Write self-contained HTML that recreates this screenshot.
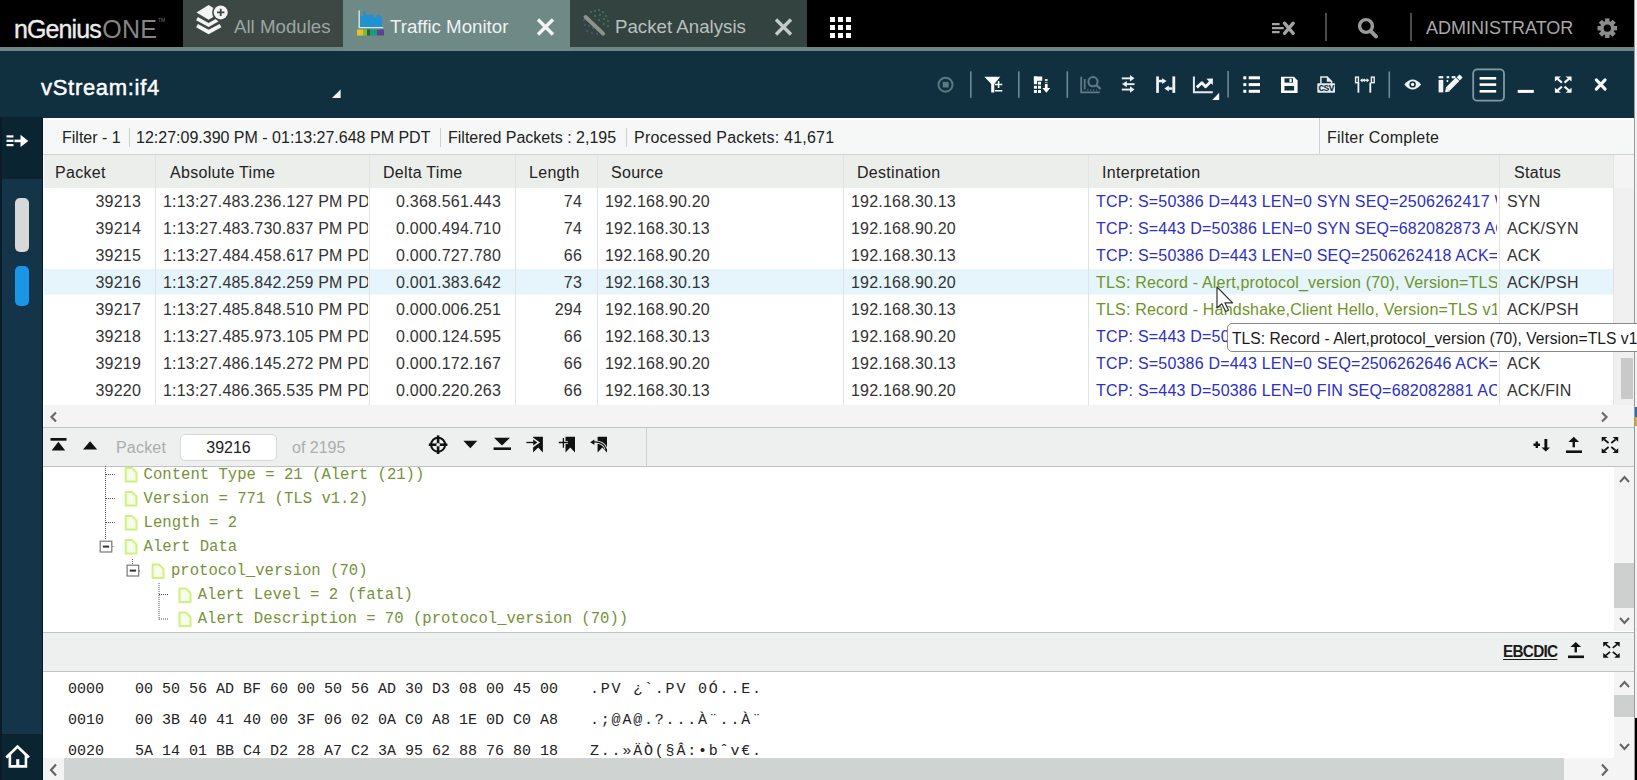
<!DOCTYPE html>
<html><head><meta charset="utf-8">
<style>
*{margin:0;padding:0;box-sizing:border-box}
html,body{width:1637px;height:780px;overflow:hidden;background:#f4f4f4;font-family:"Liberation Sans",sans-serif}
.a{position:absolute}
svg{position:absolute;overflow:visible}
.tabt{font-size:18.7px;white-space:nowrap;position:absolute}
.ft{position:absolute;top:128.5px;font-size:16px;color:#222;white-space:nowrap;line-height:18px}
.fsep{position:absolute;top:128px;width:1px;height:19px;background:#cdd0ce}
.th{position:absolute;top:163.5px;font-size:16px;color:#222;white-space:nowrap;line-height:18px;letter-spacing:0.3px}
.vl{position:absolute;width:1px;background:#e2e4e3}
.row{position:absolute;left:44px;width:1570px;height:27px}
.c{position:absolute;font-size:16px;color:#333;letter-spacing:0.2px;white-space:nowrap;overflow:hidden;top:5px;height:20px;line-height:18px}
.r{text-align:right}
.blue{color:#2b30c6}
.grn{color:#6e9426}
.tree{position:absolute;font-size:15.6px;color:#76923a;white-space:pre;font-family:"Liberation Mono",monospace;line-height:18px}
.hex{position:absolute;font-size:15px;color:#222;white-space:pre;font-family:"Liberation Mono",monospace;line-height:18px}
</style></head><body>
<!-- ===== top bar ===== -->
<div class="a" style="left:0;top:0;width:1634px;height:47px;background:#000"></div>
<div class="a" style="left:0;top:47px;width:1634px;height:4px;background:#6d8785"></div>
<div class="a" style="left:14px;top:15px;font-size:25px;color:#ececec;letter-spacing:-0.9px;white-space:nowrap"><span style="-webkit-text-stroke:0.35px #ececec">nGenius</span><span style="color:#858585;letter-spacing:0.2px;margin-left:1.5px">ONE</span></div>
<div class="a" style="left:158px;top:18px;font-size:5px;color:#777;line-height:5px">TM</div>
<div class="a" style="left:183px;top:0;width:160px;height:47px;background:#3d4744"></div>
<svg style="left:185px;top:0" width="60" height="46" viewBox="0 0 60 46">
 <path d="M11.5 12.4 L23.6 5 L35.7 12.4 L23.6 19.8 Z" fill="#f4f4f4"/>
 <path d="M12 18.6 L23.6 25 L32.5 20" fill="none" stroke="#f4f4f4" stroke-width="3.6" stroke-linejoin="miter"/>
 <path d="M12 25.6 L23.6 32 L35.5 25.6" fill="none" stroke="#f4f4f4" stroke-width="3.8"/>
 <circle cx="35.7" cy="12.4" r="8.6" fill="#3d4744"/>
 <circle cx="35.7" cy="12.4" r="7" fill="#f4f4f4"/>
 <path d="M32 12.4 H39.4 M35.7 8.7 V16.1" stroke="#3d4744" stroke-width="1.8"/>
</svg>
<div class="tabt" style="left:234px;top:16px;color:#9ca5a2">All Modules</div>
<div class="a" style="left:343px;top:0;width:227px;height:51px;background:#6e8986"></div>
<svg style="left:350px;top:5px" width="40" height="36" viewBox="0 0 40 36">
 <path d="M10.2 21.8 V11.4 Q11.5 10.8 13 11 L13.6 6.4 Q14.6 5.6 15.6 6.6 L16 9.9 Q20 9.4 23.4 10 L24 12.4 Q25 13 26.2 12.4 L26.8 9.9 Q28.8 9.5 30.4 10.4 L31 11.4 L32 12 V21.8 Z" fill="#1f92d2"/>
 <path d="M9.2 5.5 V22.6 H33.2" fill="none" stroke="#d4e6ea" stroke-width="1.4"/>
 <rect x="7" y="24.5" width="6" height="6" fill="#e5c22a"/>
 <rect x="13" y="24.5" width="4" height="6" fill="#7cbb3a"/>
 <rect x="17" y="24.5" width="3" height="6" fill="#1f6a2e"/>
 <rect x="20" y="24.5" width="7" height="6" fill="#1a9a86"/>
 <rect x="27" y="24.5" width="7" height="6" fill="#5a4490"/>
</svg>
<div class="tabt" style="left:390px;top:16px;color:#eef3f2">Traffic Monitor</div>
<svg style="left:536px;top:18px" width="19" height="18" viewBox="0 0 19 18">
 <path d="M2 1.5 L17 16.5 M17 1.5 L2 16.5" stroke="#f2f5f4" stroke-width="3.4"/>
</svg>
<div class="a" style="left:570px;top:0;width:237px;height:47px;background:#33433f"></div>
<svg style="left:575px;top:5px" width="40" height="36" viewBox="0 0 40 36">
 <g fill="#3f8a6a" opacity="0.8">
 <circle cx="24" cy="5" r="1"/><circle cx="28" cy="7" r="1"/><circle cx="31" cy="11" r="1"/><circle cx="33" cy="16" r="1"/><circle cx="33" cy="21" r="1"/><circle cx="20" cy="6" r="1"/><circle cx="25" cy="10" r="1"/><circle cx="29" cy="14" r="1"/><circle cx="29" cy="19" r="1"/><circle cx="24" cy="15" r="1"/><circle cx="16" cy="7" r="1"/><circle cx="20" cy="11" r="1"/>
 </g>
 <g fill="#5b5a9a" opacity="0.8">
 <circle cx="10" cy="20" r="1"/><circle cx="12" cy="26" r="1"/><circle cx="17" cy="28" r="1"/><circle cx="14" cy="21" r="1"/><circle cx="18" cy="23" r="1"/><circle cx="22" cy="29" r="1"/><circle cx="9" cy="15" r="1"/>
 </g>
 <path d="M10.6 12 L28.1 28.6" stroke="#8d938b" stroke-width="4" stroke-linecap="round"/>
</svg>
<div class="tabt" style="left:615px;top:16px;color:#b9c0be">Packet Analysis</div>
<svg style="left:774px;top:18px" width="19" height="18" viewBox="0 0 19 18">
 <path d="M2 1.5 L17 16.5 M17 1.5 L2 16.5" stroke="#c5cac8" stroke-width="3.4"/>
</svg>
<svg style="left:830px;top:17px" width="22" height="21" viewBox="0 0 22 21">
 <g fill="#fff"><rect x="0" y="0" width="5" height="5"/><rect x="8" y="0" width="5" height="5"/><rect x="16" y="0" width="5" height="5"/>
 <rect x="0" y="8" width="5" height="5"/><rect x="8" y="8" width="5" height="5"/><rect x="16" y="8" width="5" height="5"/>
 <rect x="0" y="16" width="5" height="5"/><rect x="8" y="16" width="5" height="5"/><rect x="16" y="16" width="5" height="5"/></g>
</svg>
<svg style="left:1265px;top:12px" width="40" height="30" viewBox="0 0 40 30">
 <path d="M7 12.1 H14.6 M7 16.2 H18.8 M7 20.2 H14.6" stroke="#a3a3a3" stroke-width="2.2"/>
 <path d="M19.5 11.2 L28.2 21.3 M28.2 11.2 L19.5 21.3" stroke="#a3a3a3" stroke-width="3.4" stroke-linecap="round"/>
</svg>
<div class="a" style="left:1325px;top:13px;width:2px;height:28px;background:#4a4a4a"></div>
<svg style="left:1350px;top:12px" width="40" height="30" viewBox="0 0 40 30">
 <circle cx="16" cy="14" r="6.4" fill="none" stroke="#9a9a9a" stroke-width="3.4"/>
 <path d="M21.5 19.8 L26 24.3" stroke="#9a9a9a" stroke-width="4" stroke-linecap="round"/>
</svg>
<div class="a" style="left:1410px;top:13px;width:2px;height:28px;background:#4a4a4a"></div>
<div class="tabt" style="left:1426px;top:17.5px;font-size:18px;color:#a8a8a8">ADMINISTRATOR</div>
<svg style="left:1590px;top:12px" width="40" height="30" viewBox="0 0 40 30">
 <g transform="translate(17.3 16.2)" fill="#8c8c8c">
  <circle r="7.2"/>
  <g id="teeth"><rect x="-2.2" y="-9.8" width="4.4" height="5"/><rect x="-2.2" y="4.8" width="4.4" height="5"/><rect x="-9.8" y="-2.2" width="5" height="4.4"/><rect x="4.8" y="-2.2" width="5" height="4.4"/></g>
  <g transform="rotate(45)"><rect x="-2.2" y="-9.8" width="4.4" height="5"/><rect x="-2.2" y="4.8" width="4.4" height="5"/><rect x="-9.8" y="-2.2" width="5" height="4.4"/><rect x="4.8" y="-2.2" width="5" height="4.4"/></g>
  <circle r="3.6" fill="#000"/>
 </g>
</svg>
<!-- ===== module header ===== -->
<div class="a" style="left:0;top:51px;width:1634px;height:67px;background:#11303f"></div>
<div class="a" style="left:41px;top:75px;font-size:22px;color:#fff;letter-spacing:0.7px;white-space:nowrap;-webkit-text-stroke:0.45px #fff">vStream:if4</div>
<svg style="left:331px;top:88px" width="12" height="12" viewBox="0 0 12 12"><path d="M1 10 L9.6 1.6 V10 Z" fill="#f2f2f2"/></svg>
<svg style="left:920px;top:60px" width="714" height="50" viewBox="0 0 714 50">
 <!-- stop -->
 <circle cx="25.5" cy="24.7" r="7" fill="none" stroke="#5a7a84" stroke-width="1.9"/>
 <rect x="22.7" y="21.9" width="6" height="5.6" fill="#5a7a84"/>
 <g fill="#6a8995">
  <rect x="50" y="11.3" width="1.6" height="26.5"/>
  <rect x="98" y="11.3" width="1.6" height="26.5"/>
  <rect x="146.5" y="11.3" width="1.6" height="26.5"/>
  <rect x="307.3" y="11" width="1.6" height="26.5"/>
  <rect x="468.5" y="11.4" width="1.6" height="26.5"/>
 </g>
 <!-- filter +- -->
 <path d="M64.4 16.7 H80.3 L74.3 24 V32.6 H71.2 V24 Z" fill="#fff"/>
 <path d="M75 26.5 H82.3 M78.6 21 V28 M75 30.8 H82.3" stroke="#11303f" stroke-width="3.2"/>
 <path d="M75 24.5 H82.3 M78.6 21 V28 M75 30.8 H82.3" stroke="#fff" stroke-width="1.5"/>
 <!-- column sort -->
 <g fill="#fff">
  <rect x="113.9" y="16.5" width="8.3" height="4.3"/>
  <rect x="113.9" y="16.5" width="3.2" height="7.7"/>
  <rect x="118" y="21.8" width="3" height="2.8"/>
  <rect x="113.9" y="25.8" width="3" height="2.9"/><rect x="118" y="25.8" width="3" height="2.9"/>
  <rect x="113.9" y="30" width="3" height="3"/><rect x="118" y="30" width="3" height="3"/>
  <rect x="124.9" y="19" width="2.7" height="2.1" opacity="0.85"/>
  <rect x="124.9" y="22.2" width="2.7" height="0.9" opacity="0.7"/>
  <rect x="124.9" y="24" width="2.7" height="5"/>
  <path d="M122.4 28 H130.2 L126.3 32.8 Z"/>
 </g>
 <!-- analysis (dim) -->
 <g stroke="#5e7c87" fill="none">
  <path d="M161.2 16.8 V32.4 H179.8" stroke-width="1.8"/>
  <path d="M164.7 19 V29.5" stroke-width="1.8"/>
  <circle cx="173" cy="21.7" r="4.6" stroke-width="2"/>
  <path d="M176.3 25 L180.5 29" stroke-width="2.4"/>
  <path d="M167 30 H177" stroke-width="1.2" stroke-dasharray="1.5 1.5"/>
 </g>
 <!-- arrows 3 -->
 <g fill="#eaf0f2">
  <rect x="201.8" y="17.4" width="9" height="1.9"/><path d="M210 15 L214.5 18.3 L210 21.6 Z"/>
  <rect x="206" y="23.2" width="8.5" height="1.9"/><path d="M206.8 20.9 L202 24.1 L206.8 27.3 Z"/>
  <rect x="201.8" y="28.6" width="9" height="1.9"/><path d="M210 26.3 L214.5 29.5 L210 32.7 Z"/>
 </g>
 <!-- |-> <-| -->
 <g fill="#f2f5f6">
  <rect x="236.2" y="16.4" width="2.7" height="16.5"/>
  <rect x="252.4" y="16.4" width="2.8" height="16.5"/>
  <rect x="238.9" y="19.8" width="3.6" height="2.5"/><path d="M242.1 18.2 L246.6 21.05 L242.1 23.9 Z"/>
  <rect x="248.4" y="27.3" width="4.1" height="2.5"/><path d="M248.8 25.5 L244.4 28.55 L248.8 31.6 Z"/>
 </g>
 <!-- chart -->
 <path d="M273.9 16.6 V32.3 H292.8" stroke="#e3ecef" stroke-width="2" fill="none"/>
 <path d="M276.8 27.4 L281.9 22.7 L285.6 26.7 L290.8 21.4" stroke="#f4f7f8" stroke-width="2.8" fill="none" stroke-linejoin="round"/>
 <path d="M286.4 18.7 L292.9 18.6 L292.8 25 Z" fill="#f4f7f8"/>
 <path d="M292.2 40 L299.2 32.8 V40 Z" fill="#f4f7f8"/>
 <!-- list -->
 <g fill="#fff">
  <rect x="323.3" y="16.3" width="3" height="3"/><rect x="323.3" y="23.1" width="3" height="3"/><rect x="323.3" y="29.8" width="3" height="3"/>
  <rect x="328.7" y="16.3" width="11.3" height="3"/><rect x="328.7" y="23.1" width="11.3" height="3"/><rect x="328.7" y="29.8" width="11.3" height="3"/>
 </g>
 <!-- save -->
 <path d="M361 16.8 H374 L377.6 20.4 V32.9 H361 Z" fill="#fff"/>
 <rect x="364.5" y="18.3" width="8.5" height="4.3" fill="#11303f"/>
 <rect x="369.5" y="18.8" width="2.2" height="3.2" fill="#fff"/>
 <rect x="364.5" y="26" width="9.6" height="4.5" fill="#11303f"/>
 <!-- csv -->
 <path d="M400.9 23.4 V17.1 H407.2 L411.6 21.6 V23.4" fill="none" stroke="#e4ecee" stroke-width="1.5"/>
 <path d="M406.8 16.4 L411.9 21.8 H406.8 Z" fill="#e4ecee"/>
 <rect x="397.3" y="23.3" width="17.7" height="9.4" rx="0.8" fill="#e4ecee"/>
 <text x="406.2" y="31.4" font-family="Liberation Mono" font-size="9.6" font-weight="bold" fill="#11303f" text-anchor="middle" letter-spacing="-0.6">CSV</text>
 <!-- antenna -->
 <g fill="none" stroke="#eef3f4" stroke-width="1.4">
  <rect x="435.6" y="17.1" width="2.8" height="5.6"/>
  <rect x="451.4" y="17.1" width="2.8" height="5.6"/>
 </g>
 <g fill="#eef3f4">
  <rect x="437.5" y="22.5" width="1.8" height="10.2"/>
  <rect x="449.4" y="22.5" width="1.8" height="10.2"/>
  <rect x="441.5" y="19.7" width="5.6" height="1.2"/>
  <path d="M440 20.3 L442.6 18.2 V22.4 Z M449.3 20.3 L446.7 18.2 V22.4 Z"/>
  <path d="M444.3 18.6 L445.9 20.3 L444.3 22 L442.7 20.3 Z"/>
 </g>
 <!-- eye -->
 <path d="M484.3 24.5 Q492.7 14.6 501.1 24.5 Q492.7 34.4 484.3 24.5 Z" fill="#eef3f5"/>
 <circle cx="492.6" cy="24.4" r="3.2" fill="#11303f"/>
 <circle cx="492.6" cy="24.4" r="1.6" fill="#fff"/>
 <!-- edit -->
 <g fill="#f2f6f7">
  <rect x="518.6" y="16.1" width="4.7" height="2.3"/>
  <rect x="518.6" y="19.9" width="4.7" height="12.5"/>
  <rect x="526.6" y="16.1" width="2.6" height="2.2"/><rect x="531.6" y="16.1" width="3.8" height="2.2"/>
  <rect x="526.6" y="20" width="1.6" height="2"/>
 </g>
 <path d="M527.6 29.3 L537.6 19.3" stroke="#f2f6f7" stroke-width="5"/>
 <path d="M536.6 17.2 L539.6 14.4 L542.6 17.4 L539.8 20.4 Z" fill="#f2f6f7"/>
 <path d="M525.1 32.3 L526 27.6 L529.8 31.4 Z" fill="#f2f6f7"/>
 <!-- eye mod -->
 <!-- hamburger box -->
 <rect x="553.2" y="9.4" width="30.8" height="31.3" rx="4" fill="none" stroke="#7d9aa5" stroke-width="1.8"/>
 <g fill="#fff">
  <rect x="559.6" y="17" width="16.6" height="2.6"/>
  <rect x="559.6" y="23.3" width="16.6" height="2.6"/>
  <rect x="559.6" y="30" width="16.6" height="2.6"/>
 </g>
 <!-- minimize -->
 <rect x="597.7" y="29.9" width="16.1" height="3" fill="#fff"/>
 <!-- expand -->
 <g transform="translate(634.9 16.4) scale(1.01 1.04)"><path d="M0 0 H6 L0 5 Z M16.5 0 H10.5 L16.5 5 Z M0 15.8 H6 L0 10.8 Z M16.5 15.8 H10.5 L16.5 10.8 Z" fill="#f4f8f9"/><path d="M2.6 2.4 L7 6 M13.9 2.4 L9.5 6 M2.6 13.4 L7 9.8 M13.9 13.4 L9.5 9.8" stroke="#f4f8f9" stroke-width="2"/></g>
 <!-- close -->
 <path d="M676.3 19.9 L685.1 29.1 M685.1 19.9 L676.3 29.1" stroke="#f4f8f9" stroke-width="3.1" stroke-linecap="round"/>
</svg>
<!-- ===== sidebar ===== -->
<div class="a" style="left:0;top:117px;width:43px;height:663px;background:#14344a"></div>
<div class="a" style="left:0;top:117px;width:43px;height:62px;background:#0a2432"></div>
<div class="a" style="left:0;top:734px;width:43px;height:46px;background:#0a2432"></div>
<div class="a" style="left:0;top:117px;width:2px;height:663px;background:#0a1c28"></div>
<svg style="left:0;top:117px" width="43" height="62" viewBox="0 0 43 62">
 <g fill="#fff">
  <rect x="6.5" y="18.3" width="7" height="2.2"/><rect x="6.5" y="22.7" width="7" height="2.2"/><rect x="6.5" y="27" width="7" height="2.2"/>
  <rect x="14.5" y="22.6" width="8" height="2.6"/>
  <path d="M20.5 17.8 L28.3 23.9 L20.5 30 Z"/>
 </g>
</svg>
<div class="a" style="left:15px;top:198px;width:14px;height:54px;border-radius:5px;background:#d8d8d8"></div>
<div class="a" style="left:15px;top:266px;width:14px;height:40px;border-radius:5px;background:#1996e6"></div>
<svg style="left:0;top:734px" width="43" height="46" viewBox="0 0 43 46">
 <path d="M6.3 23.4 L17.5 12.6 L28.9 23.4" fill="none" stroke="#fff" stroke-width="2.8" stroke-linejoin="miter"/>
 <path d="M9.85 20.5 V32.4 H25.95 V20.5" fill="none" stroke="#fff" stroke-width="2.6"/>
 <rect x="16.2" y="25.2" width="3.1" height="6" fill="#fff"/>
</svg>
<!-- ===== right strip ===== -->
<div class="a" style="left:1634px;top:0;width:3px;height:780px;background:#f2f2f2"></div>
<div class="a" style="left:1634px;top:0;width:1px;height:780px;background:#9a9a9a"></div>
<div class="a" style="left:1635px;top:407px;width:2px;height:10px;background:#2a6fc0"></div>
<div class="a" style="left:1635px;top:417px;width:2px;height:9px;background:#e0a830"></div>
<div class="a" style="left:1635px;top:718px;width:2px;height:62px;background:#000"></div>

<!-- ===== panel ===== -->
<div class="a" style="left:43px;top:118px;width:1591px;height:662px;background:#fff"></div>
<div class="a" style="left:42px;top:118px;width:1px;height:662px;background:#061822"></div>
<!-- filter bar -->
<div class="a" style="left:43px;top:118px;width:1591px;height:37px;background:#f6f8f7;border-top:2px solid #fff;border-bottom:1px solid #cfd2d0"></div>
<div class="ft" style="left:62px">Filter - 1</div>
<div class="fsep" style="left:129px"></div>
<div class="ft" style="left:136px">12:27:09.390 PM - 01:13:27.648 PM PDT</div>
<div class="fsep" style="left:440px"></div>
<div class="ft" style="left:448px">Filtered Packets : 2,195</div>
<div class="fsep" style="left:626px"></div>
<div class="ft" style="left:634px;letter-spacing:0.22px">Processed Packets: 41,671</div>
<div class="a" style="left:1319px;top:118px;width:1px;height:36px;background:#cfd2d0"></div>
<div class="ft" style="left:1327px;letter-spacing:0.25px">Filter Complete</div>
<!-- table header -->
<div class="a" style="left:44px;top:155px;width:1570px;height:33px;background:#eceeec"></div>
<div class="a" style="left:1614px;top:155px;width:20px;height:33px;background:#f3f4f3"></div>
<div class="th" style="left:55px">Packet</div>
<div class="th" style="left:170px">Absolute Time</div>
<div class="th" style="left:383px">Delta Time</div>
<div class="th" style="left:529px">Length</div>
<div class="th" style="left:611px">Source</div>
<div class="th" style="left:857px">Destination</div>
<div class="th" style="left:1102px">Interpretation</div>
<div class="th" style="left:1514px">Status</div>
<div class="row" style="top:188px;background:#fff">
 <div class="c r" style="left:26px;width:71px">39213</div>
 <div class="c" style="left:119px;width:205px">1:13:27.483.236.127 PM PD</div>
 <div class="c r" style="left:336px;width:121px">0.368.561.443</div>
 <div class="c r" style="left:476px;width:62px">74</div>
 <div class="c" style="left:561px;width:235px">192.168.90.20</div>
 <div class="c" style="left:807px;width:234px">192.168.30.13</div>
 <div class="c blue" style="left:1052px;width:401px">TCP: S=50386 D=443 LEN=0 SYN SEQ=2506262417 WIN=64240</div>
 <div class="c" style="left:1463px;width:105px">SYN</div>
</div>
<div class="row" style="top:215px;background:#fff">
 <div class="c r" style="left:26px;width:71px">39214</div>
 <div class="c" style="left:119px;width:205px">1:13:27.483.730.837 PM PD</div>
 <div class="c r" style="left:336px;width:121px">0.000.494.710</div>
 <div class="c r" style="left:476px;width:62px">74</div>
 <div class="c" style="left:561px;width:235px">192.168.30.13</div>
 <div class="c" style="left:807px;width:234px">192.168.90.20</div>
 <div class="c blue" style="left:1052px;width:401px">TCP: S=443 D=50386 LEN=0 SYN SEQ=682082873 ACK=2506262418</div>
 <div class="c" style="left:1463px;width:105px">ACK/SYN</div>
</div>
<div class="row" style="top:242px;background:#fff">
 <div class="c r" style="left:26px;width:71px">39215</div>
 <div class="c" style="left:119px;width:205px">1:13:27.484.458.617 PM PD</div>
 <div class="c r" style="left:336px;width:121px">0.000.727.780</div>
 <div class="c r" style="left:476px;width:62px">66</div>
 <div class="c" style="left:561px;width:235px">192.168.90.20</div>
 <div class="c" style="left:807px;width:234px">192.168.30.13</div>
 <div class="c blue" style="left:1052px;width:401px">TCP: S=50386 D=443 LEN=0 SEQ=2506262418 ACK=682082874</div>
 <div class="c" style="left:1463px;width:105px">ACK</div>
</div>
<div class="row" style="top:269px;background:linear-gradient(#e6f5fb 0, #e6f5fb 25.5px, #f2f9fb 25.5px, #f2f9fb 26.5px, #fff 26.5px)">
 <div class="c r" style="left:26px;width:71px">39216</div>
 <div class="c" style="left:119px;width:205px">1:13:27.485.842.259 PM PD</div>
 <div class="c r" style="left:336px;width:121px">0.001.383.642</div>
 <div class="c r" style="left:476px;width:62px">73</div>
 <div class="c" style="left:561px;width:235px">192.168.30.13</div>
 <div class="c" style="left:807px;width:234px">192.168.90.20</div>
 <div class="c grn" style="left:1052px;width:401px">TLS: Record - Alert,protocol_version (70), Version=TLS v1.2</div>
 <div class="c" style="left:1463px;width:105px">ACK/PSH</div>
</div>
<div class="row" style="top:296px;background:#fff">
 <div class="c r" style="left:26px;width:71px">39217</div>
 <div class="c" style="left:119px;width:205px">1:13:27.485.848.510 PM PD</div>
 <div class="c r" style="left:336px;width:121px">0.000.006.251</div>
 <div class="c r" style="left:476px;width:62px">294</div>
 <div class="c" style="left:561px;width:235px">192.168.90.20</div>
 <div class="c" style="left:807px;width:234px">192.168.30.13</div>
 <div class="c grn" style="left:1052px;width:401px">TLS: Record - Handshake,Client Hello, Version=TLS v1.2</div>
 <div class="c" style="left:1463px;width:105px">ACK/PSH</div>
</div>
<div class="row" style="top:323px;background:#fff">
 <div class="c r" style="left:26px;width:71px">39218</div>
 <div class="c" style="left:119px;width:205px">1:13:27.485.973.105 PM PD</div>
 <div class="c r" style="left:336px;width:121px">0.000.124.595</div>
 <div class="c r" style="left:476px;width:62px">66</div>
 <div class="c" style="left:561px;width:235px">192.168.30.13</div>
 <div class="c" style="left:807px;width:234px">192.168.90.20</div>
 <div class="c blue" style="left:1052px;width:401px">TCP: S=443 D=50386 LEN=0 SEQ=682082874 ACK=2506262646</div>
 <div class="c" style="left:1463px;width:105px">ACK</div>
</div>
<div class="row" style="top:350px;background:#fff">
 <div class="c r" style="left:26px;width:71px">39219</div>
 <div class="c" style="left:119px;width:205px">1:13:27.486.145.272 PM PD</div>
 <div class="c r" style="left:336px;width:121px">0.000.172.167</div>
 <div class="c r" style="left:476px;width:62px">66</div>
 <div class="c" style="left:561px;width:235px">192.168.90.20</div>
 <div class="c" style="left:807px;width:234px">192.168.30.13</div>
 <div class="c blue" style="left:1052px;width:401px">TCP: S=50386 D=443 LEN=0 SEQ=2506262646 ACK=682082881</div>
 <div class="c" style="left:1463px;width:105px">ACK</div>
</div>
<div class="row" style="top:377px;background:#fff">
 <div class="c r" style="left:26px;width:71px">39220</div>
 <div class="c" style="left:119px;width:205px">1:13:27.486.365.535 PM PD</div>
 <div class="c r" style="left:336px;width:121px">0.000.220.263</div>
 <div class="c r" style="left:476px;width:62px">66</div>
 <div class="c" style="left:561px;width:235px">192.168.30.13</div>
 <div class="c" style="left:807px;width:234px">192.168.90.20</div>
 <div class="c blue" style="left:1052px;width:401px">TCP: S=443 D=50386 LEN=0 FIN SEQ=682082881 ACK=2506262646</div>
 <div class="c" style="left:1463px;width:105px">ACK/FIN</div>
</div><!-- column lines -->
<div class="vl" style="left:155px;top:155px;height:250px"></div>
<div class="vl" style="left:369px;top:155px;height:250px"></div>
<div class="vl" style="left:515px;top:155px;height:250px"></div>
<div class="vl" style="left:597px;top:155px;height:250px"></div>
<div class="vl" style="left:843px;top:155px;height:250px"></div>
<div class="vl" style="left:1088px;top:155px;height:250px"></div>
<div class="vl" style="left:1499px;top:155px;height:250px"></div>
<div class="vl" style="left:1613px;top:155px;height:250px"></div>
<!-- table v scroll -->
<div class="a" style="left:1614px;top:188px;width:20px;height:217px;background:#f0f0f0"></div>
<div class="a" style="left:1621px;top:358px;width:12px;height:41px;background:#c8c9c8"></div>
<!-- tooltip -->
<div class="a" style="left:1227px;top:323px;width:420px;height:28.5px;background:#fff;border:1px solid #8a8a8a;border-radius:5px"></div>
<div class="a" style="left:1232px;top:329.5px;font-size:15.6px;color:#1a1a1a;white-space:nowrap;letter-spacing:0.05px;line-height:18px">TLS: Record - Alert,protocol_version (70), Version=TLS v1.2</div>
<svg style="left:1213px;top:284px" width="24" height="32" viewBox="0 0 24 32">
 <path d="M4 3 V24 L8.8 19.8 L12.6 27.5 L15.6 26.2 L11.9 18.8 L19.6 18.8 Z" fill="#fff" stroke="#333" stroke-width="1.2" stroke-linejoin="round"/>
</svg>
<!-- h scroll -->
<div class="a" style="left:44px;top:405px;width:1590px;height:22px;background:#f4f4f4"></div>
<svg style="left:44px;top:405px" width="1590" height="22" viewBox="0 0 1590 22">
 <path d="M12 7.5 L7.5 12 L12 16.5" fill="none" stroke="#6a6a6a" stroke-width="2.2"/>
 <path d="M1558 7.5 L1562.5 12 L1558 16.5" fill="none" stroke="#6a6a6a" stroke-width="2.2"/>
</svg>
<div class="a" style="left:43px;top:427px;width:1591px;height:1.5px;background:#c2c4c3"></div>
<!-- packet toolbar -->
<div class="a" style="left:43px;top:428px;width:1591px;height:39px;background:#edf0ee;border-bottom:1.5px solid #c2c4c3"></div>
<div class="a" style="left:646px;top:428px;width:1px;height:38px;background:#cfd1d0"></div>
<svg style="left:43px;top:428px" width="1591" height="38" viewBox="0 0 1591 38">
 <g fill="#111">
  <rect x="7.5" y="10" width="16" height="2.7"/>
  <path d="M8.6 22.4 L15.4 13.8 L22.2 22.4 Z"/>
  <path d="M40 21.5 L47.1 13.2 L54.2 21.5 Z"/>
  <!-- crosshair -->
  <circle cx="395.1" cy="16.7" r="7" fill="none" stroke="#111" stroke-width="2"/>
  <rect x="393.8" y="7.4" width="2.6" height="18.6"/><rect x="385.8" y="15.4" width="18.6" height="2.6"/>
  <circle cx="395.1" cy="16.7" r="1.8" fill="#eceeed"/>
  <path d="M420.4 12.8 L434.3 12.8 L427.35 20.2 Z"/>
  <path d="M451 9.8 H467 L459 17.5 Z"/><rect x="450.6" y="19.4" width="17.4" height="2.6"/>
  <!-- arrows into bookmark -->
  <path d="M490.1 8.7 H499.9 V24.6 L495.1 19.6 L490.1 24.6 Z"/>
  <path d="M483.4 14.5 H491 M490.2 11.2 L494.8 14.5 L490.2 17.8 Z" stroke="#eceeed" stroke-width="2.6" fill="#eceeed"/>
  <path d="M483.4 14.5 H491" stroke="#111" stroke-width="1.3"/>
  <path d="M490.2 11.6 L494.4 14.5 L490.2 17.4 Z"/>
  <path d="M522.5 8.7 H532 V24.6 L527.25 19.6 L522.5 24.6 Z"/>
  <path d="M515.8 14.5 H525 M520.4 10 V19.7" stroke="#eceeed" stroke-width="3"/>
  <path d="M515.8 14.5 H525 M520.4 10 V19.7" stroke="#111" stroke-width="1.3"/>
  <path d="M554.6 8.7 H564 V24.6 L559.3 19.6 L554.6 24.6 Z"/>
  <path d="M563 21 Q561 13.5 550 14" stroke="#eceeed" stroke-width="3" fill="none"/>
  <path d="M563 21 Q561 13.5 550 14" stroke="#111" stroke-width="1.3" fill="none"/>
  <path d="M547.2 14.2 L551.4 11.5 L551.4 17 Z"/>
  <!-- right icons -->
  <path d="M1490.5 16.8 H1497 M1493.8 13.5 V20" stroke="#111" stroke-width="2.4"/>
  <rect x="1501.4" y="11" width="2.9" height="9"/><path d="M1498.5 19.6 H1507 L1502.8 23.6 Z"/>
  <path d="M1525.4 14 L1530.75 8.8 L1536.1 14 Z"/><rect x="1529.55" y="13.5" width="2.4" height="5.8"/>
  <rect x="1523" y="22.4" width="16" height="2.6"/>
 </g>
 <g transform="translate(1558.7 9.1)"><path d="M0 0 H5.6 L0 4.7 Z M16.5 0 H10.9 L16.5 4.7 Z M0 15.8 H5.6 L0 11.1 Z M16.5 15.8 H10.9 L16.5 11.1 Z" fill="#111"/><path d="M2.6 2.4 L6.9 5.9 M13.9 2.4 L9.6 5.9 M2.6 13.4 L6.9 9.9 M13.9 13.4 L9.6 9.9" stroke="#111" stroke-width="1.7"/></g>
</svg>
<div class="a" style="left:116px;top:439px;font-size:16px;color:#abadac;line-height:18px;white-space:nowrap;letter-spacing:0.2px">Packet</div>
<div class="a" style="left:180px;top:434px;width:97px;height:26.5px;background:#fff;border:1px solid #d6d8d7;border-radius:5px"></div>
<div class="a" style="left:180px;top:439px;width:97px;text-align:center;font-size:16px;color:#222;line-height:18px">39216</div>
<div class="a" style="left:292px;top:439px;font-size:16px;color:#abadac;line-height:18px;white-space:nowrap;letter-spacing:0px">of 2195</div>
<!-- ===== tree pane ===== -->
<svg style="left:90px;top:466px" width="120" height="166" viewBox="0 0 120 166">
 <g stroke="#555" stroke-width="1" stroke-dasharray="1 1" fill="none">
  <path d="M15.5 0 V73"/>
  <path d="M16 8.5 H24.6 M16 32.5 H24.6 M16 56.5 H24.6"/>
  <path d="M22.4 80.5 H24.6"/>
  <path d="M42.5 93 V98.5"/>
  <path d="M49 105 H51"/>
  <path d="M69 117 V153.5 M69 128.5 H78.6 M69 153 H78.6"/>
 </g>
 <g fill="#fff" stroke="#777" stroke-width="1.2">
  <rect x="10.2" y="75.2" width="11.6" height="10.8"/>
  <rect x="37.1" y="99.2" width="11.6" height="10.8"/>
 </g>
 <g fill="#333"><rect x="12.8" y="79.6" width="6.4" height="2"/><rect x="39.7" y="103.6" width="6.4" height="2"/></g>
 <g fill="#f6fde9" stroke="#cff27f" stroke-width="2">
  <path d="M 35.7 2 H 42 L 46.5 6.5 V 15.5 H 35.7 Z"/>
  <path d="M 35.7 26 H 42 L 46.5 30.5 V 39.5 H 35.7 Z"/>
  <path d="M 35.7 50 H 42 L 46.5 54.5 V 63.5 H 35.7 Z"/>
  <path d="M 35.7 74 H 42 L 46.5 78.5 V 87.5 H 35.7 Z"/>
  <path d="M 62.6 98.5 H 69 L 73.5 103 V 112 H 62.6 Z"/>
  <path d="M 89.5 122.5 H 96 L 100.5 127 V 136 H 89.5 Z"/>
  <path d="M 89.5 146.5 H 96 L 100.5 151 V 160 H 89.5 Z"/>
 </g>
</svg>
<div class="tree" style="left:143.6px;top:465.5px">Content Type = 21 (Alert (21))</div>
<div class="tree" style="left:143.6px;top:489.5px">Version = 771 (TLS v1.2)</div>
<div class="tree" style="left:143.6px;top:513.5px">Length = 2</div>
<div class="tree" style="left:143.6px;top:537.5px">Alert Data</div>
<div class="tree" style="left:171px;top:562.0px">protocol_version (70)</div>
<div class="tree" style="left:197.7px;top:586.0px">Alert Level = 2 (fatal)</div>
<div class="tree" style="left:197.7px;top:610.0px">Alert Description = 70 (protocol_version (70))</div>
<!-- tree cover top (clip) -->
<div class="a" style="left:43px;top:428px;width:1591px;height:38px;background:#eceeed;border-bottom:1px solid #c4c6c5;z-index:0;display:none"></div>
<!-- tree v scroll -->
<div class="a" style="left:1614px;top:467px;width:20px;height:164px;background:#f4f4f4"></div>
<div class="a" style="left:1614px;top:563px;width:20px;height:45px;background:#cdd0cf"></div>
<svg style="left:1614px;top:467px" width="20" height="164" viewBox="0 0 20 164">
 <path d="M6 15 L10.5 10 L15 15" fill="none" stroke="#666" stroke-width="2"/>
 <path d="M6 151 L10.5 156 L15 151" fill="none" stroke="#666" stroke-width="2"/>
</svg>

<!-- ===== hex toolbar ===== -->
<div class="a" style="left:43px;top:631.5px;width:1591px;height:40px;background:#edf0ee;border-top:1.5px solid #c2c4c3;border-bottom:1.5px solid #c2c4c3"></div>
<div class="a" style="left:1503px;top:641.5px;font-size:16.5px;font-weight:bold;color:#1a1a1a;letter-spacing:-0.8px;line-height:18px;text-decoration:underline;text-underline-offset:2px;transform:scaleX(0.93);transform-origin:left">EBCDIC</div>
<svg style="left:1560px;top:633px" width="70" height="38" viewBox="0 0 70 38">
 <g fill="#111">
  <path d="M10.4 14.1 L15.75 8.9 L21.1 14.1 Z"/><rect x="14.55" y="13.6" width="2.4" height="5.8"/>
  <rect x="8" y="22.5" width="16" height="2.6"/>
 </g>
 <g transform="translate(43.2 9)"><path d="M0 0 H5.6 L0 4.7 Z M16.5 0 H10.9 L16.5 4.7 Z M0 15.8 H5.6 L0 11.1 Z M16.5 15.8 H10.9 L16.5 11.1 Z" fill="#111"/><path d="M2.6 2.4 L6.9 5.9 M13.9 2.4 L9.6 5.9 M2.6 13.4 L6.9 9.9 M13.9 13.4 L9.6 9.9" stroke="#111" stroke-width="1.7"/></g>

</svg>
<!-- ===== hex content ===== -->
<div class="hex" style="left:68px;top:681px">0000</div>
<div class="hex" style="left:135px;top:681px">00 50 56 AD BF 60 00 50 56 AD 30 D3 08 00 45 00</div>
<div class="hex" style="left:590px;top:681px;letter-spacing:1.8px">.PV ¿`.PV 0Ó..E.</div>
<div class="hex" style="left:68px;top:712px">0010</div>
<div class="hex" style="left:135px;top:712px">00 3B 40 41 40 00 3F 06 02 0A C0 A8 1E 0D C0 A8</div>
<div class="hex" style="left:590px;top:712px;letter-spacing:1.8px">.;@A@.?...À¨..À¨</div>
<div class="hex" style="left:68px;top:743px">0020</div>
<div class="hex" style="left:135px;top:743px">5A 14 01 BB C4 D2 28 A7 C2 3A 95 62 88 76 80 18</div>
<div class="hex" style="left:590px;top:743px;letter-spacing:1.8px">Z..»ÄÒ(§Â:•bˆv€.</div>
<!-- hex v scroll -->
<div class="a" style="left:1614px;top:672px;width:20px;height:86px;background:#f4f4f4"></div>
<div class="a" style="left:1614px;top:695px;width:20px;height:22px;background:#cdd0cf"></div>
<svg style="left:1614px;top:671px" width="20" height="87" viewBox="0 0 20 87">
 <path d="M6 16 L10.5 11 L15 16" fill="none" stroke="#666" stroke-width="2"/>
 <path d="M6 73 L10.5 78 L15 73" fill="none" stroke="#666" stroke-width="2"/>
</svg>
<!-- bottom h scroll -->
<div class="a" style="left:43px;top:758px;width:1591px;height:22px;background:#f4f4f4"></div>
<div class="a" style="left:64px;top:758px;width:1500px;height:22px;background:#cfd3d2"></div>
<svg style="left:43px;top:758px" width="1591" height="22" viewBox="0 0 1591 22">
 <path d="M13 6.5 L8 12 L13 17.5" fill="none" stroke="#666" stroke-width="2.2"/>
 <path d="M1559 6.5 L1564 12 L1559 17.5" fill="none" stroke="#666" stroke-width="2.2"/>
</svg>
</body></html>
